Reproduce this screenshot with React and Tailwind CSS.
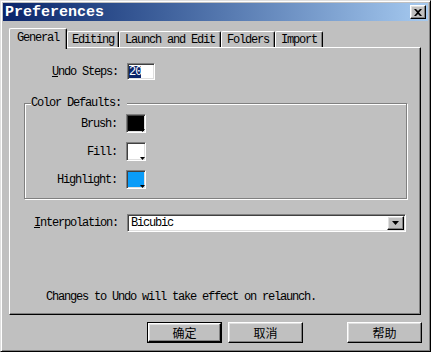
import React from "react";

const mono = "font-['Liberation_Mono',monospace] text-[12px] leading-[12px] tracking-[-1.2px] text-black";
const raised = "border border-t-white border-l-white border-r-black border-b-black shadow-[inset_-1px_-1px_#808080,inset_1px_1px_#dfdfdf]";
const sunken = "border border-t-[#808080] border-l-[#808080] border-r-white border-b-white shadow-[inset_1px_1px_#404040,inset_-1px_-1px_#dfdfdf]";

const tabs = [
  { name: "General", w: "w-[58px]" },
  { name: "Editing", w: "w-[52px]" },
  { name: "Launch and Edit", w: "w-[102px]" },
  { name: "Folders", w: "w-[54px]" },
  { name: "Import", w: "w-[48px]" },
];

const Swatch = ({ color }) => (
  <div className={`relative w-[20px] h-[19px] p-[1px] ${sunken}`}>
    <div className={`w-full h-full ${color}`} />
    <svg className="absolute right-[-1px] bottom-[-1px]" width="6" height="4" viewBox="0 0 6 4">
      <polygon points="0,0 5,0 2.5,3" fill="#000" />
    </svg>
  </div>
);

const ColorRow = ({ label, color }) => (
  <div className="flex items-center h-[19px]">
    <div className={`w-[92px] text-right ${mono}`}>{label}</div>
    <div className="ml-[9px]">
      <Swatch color={color} />
    </div>
  </div>
);

const Button = ({ label, primary }) => (
  <div className={`w-[75px] h-[21px] ${primary ? "border border-black" : ""}`}>
    <div className={`w-full h-full flex items-center justify-center bg-[#c0c0c0] ${raised} font-['Noto_Sans_CJK_SC',sans-serif] text-[12px] leading-[12px] text-black`}>
      {label}
    </div>
  </div>
);

export default function App() {
  return (
    <div className="w-[431px] h-[352px] bg-[#c0c0c0] border border-t-[#dfdfdf] border-l-[#dfdfdf] border-r-black border-b-black shadow-[inset_1px_1px_#fff,inset_-1px_-1px_#808080] p-[2px] flex flex-col overflow-hidden">
      {/* title bar */}
      <div className="h-[18px] flex items-center justify-between bg-linear-to-r from-[#0a246a] to-[#a6caf0]">
        <div className="pl-[2px] pt-[2px] font-['Liberation_Mono',monospace] font-bold text-[15px] leading-[16px] text-white">
          Preferences
        </div>
        <div className={`mr-[2px] w-[16px] h-[14px] bg-[#c0c0c0] flex items-center justify-center ${raised}`}>
          <svg width="8" height="7" viewBox="0 0 8 7">
            <path d="M0 0 L2 0 L4 2 L6 0 L8 0 L5 3.5 L8 7 L6 7 L4 5 L2 7 L0 7 L3 3.5 Z" fill="#000" />
          </svg>
        </div>
      </div>

      {/* tabs */}
      <div className="mt-[7px] ml-[6px] flex items-end">
        {tabs.map((t, i) =>
          i === 0 ? (
            <div
              key={t.name}
              className={`${t.w} h-[21px] -mb-[2px] relative z-10 bg-[#c0c0c0] border-t border-l border-t-white border-l-white border-r border-r-black shadow-[inset_-1px_0_#808080] rounded-t-[2px] pt-[3px] text-center ${mono}`}
            >
              {t.name}
            </div>
          ) : (
            <div
              key={t.name}
              className={`${t.w} h-[16px] bg-[#c0c0c0] border-t border-l border-t-white border-l-white border-r border-r-black shadow-[inset_-1px_0_#808080] rounded-t-[2px] pt-[2px] text-center ${mono}`}
            >
              {t.name}
            </div>
          )
        )}
      </div>

      {/* panel */}
      <div className="ml-[6px] w-[412px] h-[268px] border border-t-white border-l-white border-r-black border-b-black shadow-[inset_-1px_-1px_#808080] flex flex-col">
        <div className="mt-[15px] flex items-center h-[17px]">
          <div className={`w-[108px] text-right ${mono}`}>
            <span className="underline">U</span>ndo Steps:
          </div>
          <div className={`ml-[9px] w-[28px] h-[17px] bg-white flex items-center ${sunken}`}>
            <span className={`ml-[1px] bg-[#0a246a] ${mono} tracking-[-1px] text-white`}>20</span>
          </div>
        </div>

        <fieldset className="mt-[17px] ml-[14px] w-[383px] border border-[#808080] shadow-[1px_1px_0_#fff,inset_1px_1px_0_#fff] pb-[9px] flex flex-col gap-[9px]">
          <legend className={`ml-[6px] pr-[6px] bg-[#c0c0c0] ${mono}`}>Color Defaults:</legend>
          <div className="mt-[5px]">
            <ColorRow label="Brush:" color="bg-black" />
          </div>
          <ColorRow label="Fill:" color="bg-white" />
          <ColorRow label="Highlight:" color="bg-[#0a9cf8]" />
        </fieldset>

        <div className="mt-[15px] flex items-center h-[18px]">
          <div className={`w-[108px] text-right ${mono}`}>
            <span className="underline">I</span>nterpolation:
          </div>
          <div className={`ml-[9px] w-[279px] h-[18px] bg-white flex items-center justify-between p-[1px] ${sunken}`}>
            <span className={`ml-[2px] ${mono}`}>Bicubic</span>
            <div className={`w-[17px] h-full bg-[#c0c0c0] flex items-center justify-center ${raised}`}>
              <svg width="7" height="4" viewBox="0 0 7 4">
                <polygon points="0,0 7,0 3.5,4" fill="#000" />
              </svg>
            </div>
          </div>
        </div>

        <div className={`mt-[59px] ml-[36px] ${mono}`}>
          Changes to Undo will take effect on relaunch.
        </div>
      </div>

      {/* buttons */}
      <div className="mt-[7px] flex pl-[144px]">
        <Button label="确定" primary />
        <div className="ml-[6px]">
          <Button label="取消" />
        </div>
        <div className="ml-[44px]">
          <Button label="帮助" />
        </div>
      </div>
    </div>
  );
}
